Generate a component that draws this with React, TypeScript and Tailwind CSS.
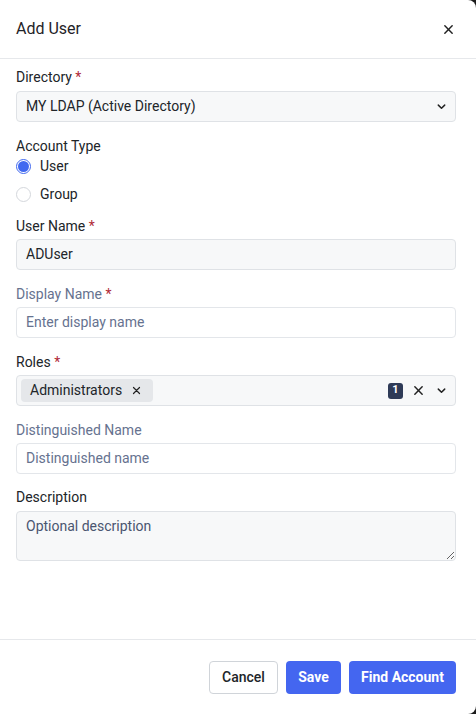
import React from "react";

function XIcon({ className = "" }: { className?: string }) {
  return (
    <svg viewBox="0 0 12 12" className={className} fill="none" stroke="currentColor" strokeWidth="1.6" strokeLinecap="round">
      <path d="M2 2l8 8M10 2l-8 8" />
    </svg>
  );
}

function Chevron({ className = "" }: { className?: string }) {
  return (
    <svg viewBox="0 0 12 12" className={className} fill="none" stroke="currentColor" strokeWidth="1.6" strokeLinecap="round" strokeLinejoin="round">
      <path d="M2.5 4.5L6 8l3.5-3.5" />
    </svg>
  );
}

function Label({ children, required, muted }: { children: React.ReactNode; required?: boolean; muted?: boolean }) {
  return (
    <div className={`text-[14px] leading-[20px] ${muted ? "text-[#66728f]" : "text-[#212529]"}`}>
      {children}
      {required && <span className="text-[#b02a37]"> *</span>}
    </div>
  );
}

export default function App() {
  return (
    <div className="w-[476px] h-[714px] bg-[#1c1c1c]" style={{ fontFamily: "Roboto, 'Liberation Sans', sans-serif" }}>
      <div className="w-full h-full bg-white rounded-r-lg flex flex-col">
        {/* header */}
        <div className="h-[59px] border-b border-[#e6e8eb] flex items-center justify-between pl-4 pr-[22px]">
          <span className="text-[16px] text-[#1f2328]">Add User</span>
          <XIcon className="w-[11px] h-[11px] text-[#222]" />
        </div>

        {/* body */}
        <div className="flex-1 pl-4 pr-5 pt-[8px]">
          <Label required>Directory</Label>
          <div className="mt-[4px] h-[31px] rounded border border-[#dfe2e6] bg-[#f7f8f9] flex items-center justify-between pl-[9px] pr-[8px]">
            <span className="text-[14px] text-[#212529]">MY LDAP (Active Directory)</span>
            <Chevron className="w-[11px] h-[11px] text-[#222]" />
          </div>

          <div className="mt-[14px]">
            <Label>Account Type</Label>
            <div className="flex items-center h-[20px] gap-[9px]">
              <span className="w-[15px] h-[15px] rounded-full border border-[#4169f0] flex items-center justify-center">
                <span className="w-[11px] h-[11px] rounded-full bg-[#4169f0]" />
              </span>
              <span className="text-[14px] text-[#212529]">User</span>
            </div>
            <div className="flex items-center h-[20px] gap-[9px] mt-[8px]">
              <span className="w-[15px] h-[15px] rounded-full border border-[#d4d7dc] bg-white" />
              <span className="text-[14px] text-[#212529]">Group</span>
            </div>
          </div>

          <div className="mt-[12px]">
            <Label required>User Name</Label>
            <div className="mt-[3px] h-[31px] rounded border border-[#dfe2e6] bg-[#f7f8f9] flex items-center pl-[9px]">
              <span className="text-[14px] text-[#212529]">ADUser</span>
            </div>
          </div>

          <div className="mt-[14px]">
            <Label required muted>Display Name</Label>
            <div className="mt-[3px] h-[31px] rounded border border-[#e3e6ea] bg-white flex items-center pl-[9px]">
              <span className="text-[14px] text-[#66728f]">Enter display name</span>
            </div>
          </div>

          <div className="mt-[14px]">
            <Label required>Roles</Label>
            <div className="mt-[3px] h-[31px] rounded border border-[#dfe2e6] bg-[#f7f8f9] flex items-center pl-[4px] pr-[8px]">
              <div className="h-[23px] w-[132px] bg-[#e5e7ea] rounded-sm flex items-center pl-[9px] gap-[10px]">
                <span className="text-[14px] text-[#212529]">Administrators</span>
                <XIcon className="w-[9px] h-[9px] text-[#222]" />
              </div>
              <div className="flex-1" />
              <span className="w-[15px] h-[16px] rounded-[3px] bg-[#2e3a57] text-white text-[11px] font-bold flex items-center justify-center">1</span>
              <XIcon className="w-[11px] h-[11px] text-[#222] ml-[10px]" />
              <Chevron className="w-[11px] h-[11px] text-[#222] ml-[12px]" />
            </div>
          </div>

          <div className="mt-[14px]">
            <Label muted>Distinguished Name</Label>
            <div className="mt-[3px] h-[31px] rounded border border-[#e3e6ea] bg-white flex items-center pl-[9px]">
              <span className="text-[14px] text-[#66728f]">Distinguished name</span>
            </div>
          </div>

          <div className="mt-[13px]">
            <Label>Description</Label>
            <textarea
              readOnly
              placeholder="Optional description"
              className="mt-[4px] block w-full h-[50px] rounded border border-[#dfe2e6] bg-[#f7f8f9] px-[9px] py-[4px] text-[14px] leading-[20px] text-[#212529] placeholder:text-[#4a5570] outline-none"
              style={{ fontFamily: "Roboto, 'Liberation Sans', sans-serif" }}
            />
          </div>
        </div>

        {/* footer */}
        <div className="h-[75px] border-t border-[#e6e8eb] flex items-center justify-end gap-2 pl-4 pr-5 pt-[1px]">
          <button className="h-[33px] w-[69px] rounded border border-[#d0d4d9] bg-white text-[14px] font-medium text-[#212529]">Cancel</button>
          <button className="h-[33px] w-[55px] rounded bg-[#4466f0] text-[14px] font-bold text-white">Save</button>
          <button className="h-[33px] w-[107px] rounded bg-[#4466f0] text-[14px] font-bold text-white">Find Account</button>
        </div>
      </div>
    </div>
  );
}
